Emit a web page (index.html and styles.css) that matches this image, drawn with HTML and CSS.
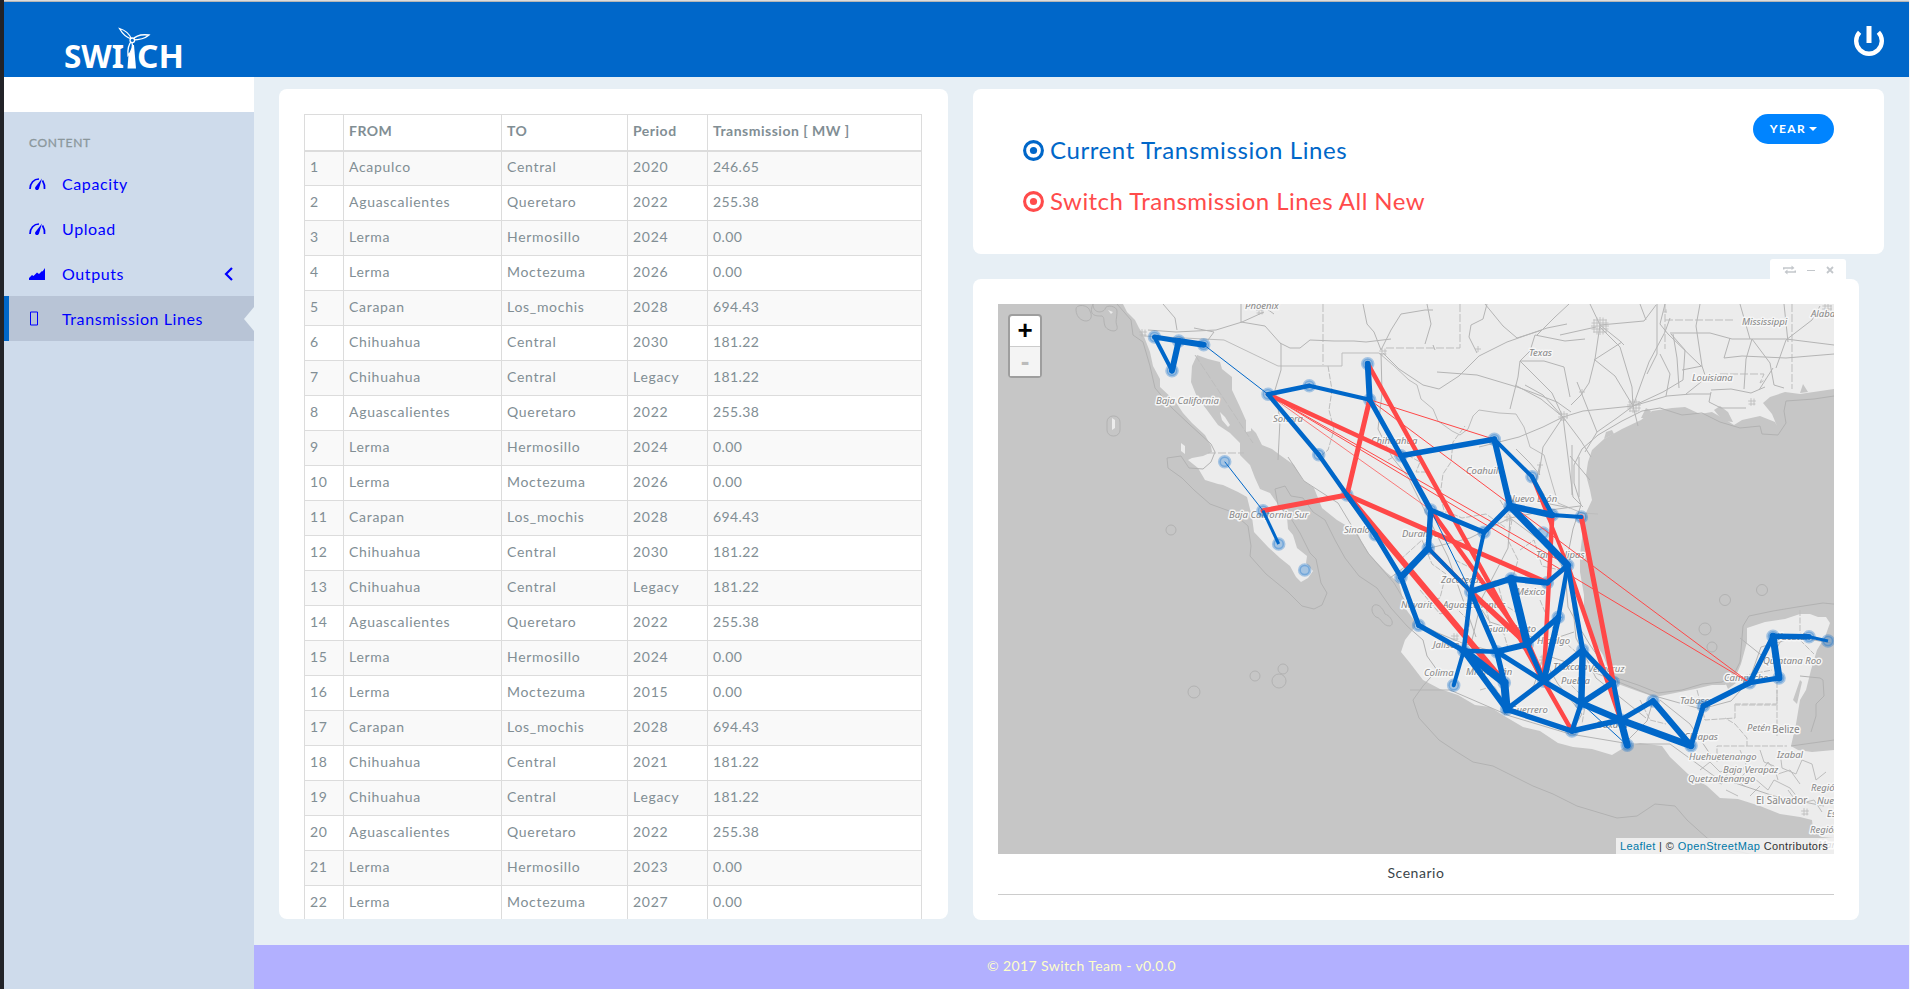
FILE: index.html
```html
<!DOCTYPE html>
<html lang="en">
<head>
<meta charset="utf-8">
<title>Switch - Transmission Lines</title>
<link rel="stylesheet" href="styles.css">
</head>
<body>
<header class="topbar">
  <svg class="logo" width="122" height="46" viewBox="62 26 122 46" fill="#fff">
    <text class="logo-text" x="64" y="68.4" textLength="60" lengthAdjust="spacingAndGlyphs">SWI</text>
    <text class="logo-text" x="137" y="68.4" textLength="47" lengthAdjust="spacingAndGlyphs">CH</text>
    <path d="M131 45h3l2 23.500h-8.500l1-14z"/>
    <g fill="#0067c9" stroke="#fff" stroke-width="1.300">
      <path d="M131.500 39c-5-1.500-9-5-12-10.500 5 1.500 9.500 4.500 12 10.500z"/>
      <path d="M132.500 40c3-4.500 8-6 16.500-5-4 3.500-10 5-16.500 5z"/>
      <path d="M131.500 41c2 5 0 10.500-3.500 14.500-.500-6 .500-11 3.500-14.500z"/>
      <circle cx="132.300" cy="40.300" r="2.300"/>
    </g>
  </svg>
  <svg class="power" width="30" height="30" viewBox="0 0 30 30" fill="none" stroke="#fff" stroke-width="4.400">
    <path d="M5.600 6.200A12.800 12.800 0 1 0 24.400 6.200"/><path d="M15 0v17" stroke-width="5"/>
  </svg>
</header>
<div class="page">
  <nav class="sidebar">
    <div class="menu">
      <div class="menu-title">CONTENT</div>
      <a class="item"><svg width="17" height="12" viewBox="0 0 17 12"><path d="M1 11C1 5 5 1 10 1M13.500 2.500C15 5 16 7.500 15.500 11" fill="none" stroke="#00f" stroke-width="1.700"/><path d="M13 .5L10 10.500a2 2 0 1 1-3.200-2z" fill="#00f"/></svg><span>Capacity</span></a>
      <a class="item"><svg width="17" height="12" viewBox="0 0 17 12"><path d="M1 11C1 5 5 1 10 1M13.500 2.500C15 5 16 7.500 15.500 11" fill="none" stroke="#00f" stroke-width="1.700"/><path d="M13 .5L10 10.500a2 2 0 1 1-3.200-2z" fill="#00f"/></svg><span>Upload</span></a>
      <a class="item"><svg width="17" height="12" viewBox="0 0 17 12"><path d="M0 12V10l3-3 1.500 1L8 4.500l2 1.500 3-3 .5.500L16 0v12z" fill="#00f"/></svg><span>Outputs</span><svg class="chev" width="9" height="14" viewBox="0 0 9 14"><path d="M8 1L2 7l6 6" fill="none" stroke="#00f" stroke-width="2.200"/></svg></a>
      <a class="item active"><svg width="17" height="15" viewBox="0 0 17 15"><path d="M1.500 1h7v13h-7z" fill="none" stroke="#00f"/></svg><span>Transmission Lines</span></a>
    </div>
  </nav>
  <div class="body">
    <main class="content">
      <section class="card table-card">
        <table class="grid">
          <colgroup><col class="c1"><col class="c2"><col class="c3"><col class="c4"><col class="c5"></colgroup>
          <thead><tr><th></th><th>FROM</th><th>TO</th><th>Period</th><th>Transmission [ MW ]</th></tr></thead>
          <tbody>
            <tr><td>1</td><td>Acapulco</td><td>Central</td><td>2020</td><td>246.65</td></tr>
            <tr><td>2</td><td>Aguascalientes</td><td>Queretaro</td><td>2022</td><td>255.38</td></tr>
            <tr><td>3</td><td>Lerma</td><td>Hermosillo</td><td>2024</td><td>0.00</td></tr>
            <tr><td>4</td><td>Lerma</td><td>Moctezuma</td><td>2026</td><td>0.00</td></tr>
            <tr><td>5</td><td>Carapan</td><td>Los_mochis</td><td>2028</td><td>694.43</td></tr>
            <tr><td>6</td><td>Chihuahua</td><td>Central</td><td>2030</td><td>181.22</td></tr>
            <tr><td>7</td><td>Chihuahua</td><td>Central</td><td>Legacy</td><td>181.22</td></tr>
            <tr><td>8</td><td>Aguascalientes</td><td>Queretaro</td><td>2022</td><td>255.38</td></tr>
            <tr><td>9</td><td>Lerma</td><td>Hermosillo</td><td>2024</td><td>0.00</td></tr>
            <tr><td>10</td><td>Lerma</td><td>Moctezuma</td><td>2026</td><td>0.00</td></tr>
            <tr><td>11</td><td>Carapan</td><td>Los_mochis</td><td>2028</td><td>694.43</td></tr>
            <tr><td>12</td><td>Chihuahua</td><td>Central</td><td>2030</td><td>181.22</td></tr>
            <tr><td>13</td><td>Chihuahua</td><td>Central</td><td>Legacy</td><td>181.22</td></tr>
            <tr><td>14</td><td>Aguascalientes</td><td>Queretaro</td><td>2022</td><td>255.38</td></tr>
            <tr><td>15</td><td>Lerma</td><td>Hermosillo</td><td>2024</td><td>0.00</td></tr>
            <tr><td>16</td><td>Lerma</td><td>Moctezuma</td><td>2015</td><td>0.00</td></tr>
            <tr><td>17</td><td>Carapan</td><td>Los_mochis</td><td>2028</td><td>694.43</td></tr>
            <tr><td>18</td><td>Chihuahua</td><td>Central</td><td>2021</td><td>181.22</td></tr>
            <tr><td>19</td><td>Chihuahua</td><td>Central</td><td>Legacy</td><td>181.22</td></tr>
            <tr><td>20</td><td>Aguascalientes</td><td>Queretaro</td><td>2022</td><td>255.38</td></tr>
            <tr><td>21</td><td>Lerma</td><td>Hermosillo</td><td>2023</td><td>0.00</td></tr>
            <tr><td>22</td><td>Lerma</td><td>Moctezuma</td><td>2027</td><td>0.00</td></tr>
          </tbody>
        </table>
      </section>
      <div class="right">
        <section class="card legend">
          <div class="legend-list">
            <div class="legend-row current"><svg width="21" height="21" viewBox="0 0 21 21"><circle cx="10.500" cy="10.500" r="8.900" fill="none" stroke="currentColor" stroke-width="3.100"/><circle cx="10.500" cy="10.500" r="3.600" fill="currentColor"/></svg><span>Current Transmission Lines</span></div>
            <div class="legend-row fresh"><svg width="21" height="21" viewBox="0 0 21 21"><circle cx="10.500" cy="10.500" r="8.900" fill="none" stroke="currentColor" stroke-width="3.100"/><circle cx="10.500" cy="10.500" r="3.600" fill="currentColor"/></svg><span>Switch Transmission Lines All New</span></div>
          </div>
          <button class="year">YEAR<i class="caret"></i></button>
        </section>
        <section class="card map-card">
          <div class="tools">
            <svg width="13" height="10" viewBox="0 0 13 10" fill="none" stroke="#c3c7cb" stroke-width="1.500"><path d="M.7 4.500V3h9M12.300 5.500V7h-9"/><path d="M8.500.5l3 2.500-3 2zM4.500 4.500L1.500 7l3 2.500z" fill="#c3c7cb" stroke="none"/></svg>
            <svg width="8" height="10" viewBox="0 0 8 10"><path d="M0 5.500h8" stroke="#c3c7cb"/></svg>
            <svg width="8" height="8" viewBox="0 0 8 8"><path d="M1 1l6 6M7 1L1 7" stroke="#c3c7cb" stroke-width="1.800"/></svg>
          </div>
          <div class="map">
            <svg id="map" width="836" height="550" viewBox="998 304 836 550">
              <path class="land" id="land" d="M1123 304L1127 312 1135 320 1139 328 1143 334 1150 352 1153 366 1160 379 1160 387 1175 401 1183 413 1192 423 1205 435 1211 446 1212 452 1203 456 1192 458 1188 460 1198 468 1205 480 1218 484 1223 485 1238 492 1247 497 1252 517 1254 532 1268 547 1280 558 1290 566 1296 577 1301 582 1308 578 1313 571 1306 563 1307 556 1297 548 1293 535 1288 529 1287 517 1277 503 1270 493 1260 489 1255 478 1250 465 1240 455 1240 443 1230 433 1218 425 1207 410 1197 397 1191 382 1192 366 1197 355 1208 359 1220 362 1222 369 1232 377 1232 390 1240 407 1248 425 1256 433 1262 445 1272 449 1280 455 1294 465 1303 480 1314 488 1322 508 1337 520 1347 526 1356 530 1362 542 1370 555 1386 572 1399 583 1402 595 1405 608 1414 620 1415 627 1405 640 1401 652 1410 663 1423 680 1440 689 1458 695 1475 705 1490 707 1506 717 1523 727 1540 731 1558 743 1573 747 1592 749 1612 755 1625 747 1640 743 1662 746 1670 757 1688 774 1707 786 1720 798 1738 799 1760 806 1780 814 1800 817 1812 820 1813 830 1822 837 1834 838V750L1812 752 1798 750 1791 746 1796 724 1800 700 1806 690 1811 670 1817 650 1825 637 1830 623 1826 617 1818 617 1810 614 1800 614 1785 619 1765 622 1747 628 1747 642 1741 664 1735 678 1725 685 1712 685 1695 689 1675 693 1655 697 1640 692 1618 684 1608 668 1603 655 1592 638 1584 620 1584 595 1580 572 1580 555 1583 530 1585 515 1592 500 1590 490 1586 475 1588 462 1592 450 1604 439 1622 429 1641 420 1652 411 1672 408 1685 407 1700 414 1712 412 1726 420 1734 425 1742 420 1760 416 1775 422 1777 426 1772 414 1763 403 1770 397 1785 392 1800 394 1834 389V304Z"/>
              <path class="land" d="M1112 418l3 2v8l-3 2zM1181 443l4 3v8l-4-3zM1220 412l5 5 5 8-2 2-6-7zM1246 420l5 3v8l-5 1zM1108 310l5 2-2 2zM1085 313l3 2z"/>
              <g class="water">
                <path d="M1725 682l6-4 5 5-8 6zM1793 700l7-20 2 2-5 22zM1799 546z"/>
                <path d="M1604 439l10-5-2-4-6 2zM1641 418l5-10 5 3-3 7zM1714 410l6-4 8 6 5 10-10-1zM1800 393l3-9 5 8z"/>
              </g>
              <path class="coast" d="M1117 304l14 16 2 15 10 7 7 24 5 22 17 20 17 16 22 20 4 8-4 10-8 7-14-1-8-12-14 2 1 10 14 10 12 12 16 14 22 8 16 14 3 20-1 10 16 18 22 18 14 14 12 3 8-4 5-12-6-10-5-24-6-6-10-20-10-16-12-12-3-16 10-3 6 10 12 2 10 14 12 8 10 20 10 18 14 18 18 12 14 20 16 18 16 14 4 16 10 14-14 16-10 14 6 18 20 22 18 12 16 10 20 4 20 10 20 10 20 8 24 12 20 6 20 6 20-2 18-12 20 2 12 14 20 18 20 12 14 2 24 6 22 12 24 6 10 4-1 12 10 7"/>
              <path class="coast" d="M1834 396l-20 3-28 2-2 10 2 12-8 12-16-1-2-8-20 2-20-6-18-9-20 2-22-7-18 3-20 10-24 14-16 14-8 16v18l7 22-8 24-6 30-1 24 2 24 10 18 12 20 14 20 10 12 24 8 20 8 24-3 20-6 20-2 12-8 6-12 3-36 6-10 24-5 24-4 26-4 20 2M1800 676l20 2 3 2 1 16-8 8v12l-5 16M1791 746l43-6"/>
              <g class="coast">
                <circle cx="1171" cy="530" r="5"/><circle cx="1194" cy="692" r="6"/><circle cx="1255" cy="676" r="5"/><circle cx="1283" cy="669" r="5"/><circle cx="1279" cy="681" r="7"/><circle cx="1725" cy="600" r="5.500"/><circle cx="1762" cy="590" r="5.500"/><circle cx="1705" cy="629" r="6"/><circle cx="1712" cy="647" r="5"/>
                <rect x="1107" y="416" width="13" height="20" rx="6"/><path d="M1076 309c0-5 12-5 14 2 4 8-2 12-8 9-4-2-6-6-6-11zM1093 304c0 10 10 9 12 5 1-5 12-3 12 2 0 8-2 10 0 15 2 8-10 5-12 0-2-6 0-8-3-10-6 0-14 0-9-12zM1373 606c4-4 10 2 12 8 6 2 10 10 5 12-8 0-8-8-14-9-4-3-5-8-3-11z"/>
              </g>
              <g class="border">
                <path d="M1144 336l80 4 54 26h64v-13h37M1379 353l14 12 16 15 8 5 4 14 12 10 5 12 14 10 8 4 8-6 5-13 6-6 20 3 17 1 8 13 6 20 14 8 8 28 6 20 24 10 16 1"/>
                <path d="M1323 304v61M1460 304v44h-74M1665 304v45M1792 304v85M1720 374h44l-4 9 6-4M1665 320h70M1195 355l58 88M1208 453h36" stroke-dasharray="8 2"/>
                <path d="M1328 366l4 24-3 20 5 20-6 20-10 8M1388 460l14-8 18 10-4 10 14 0M1444 510l-4-14 3-22 8-12 2-20 12-16M1430 512l18 0 14 6 24-4 20 14M1500 500l12 20-4 20 10 20-6 20M1455 560l20 10 10 14 12-4 6 24 16 10M1520 550l14-10 8 26 18 4M1400 560l22-20 10 24 14 10-6 24-16 4M1420 590l20 24 16-6 14 14-4 20M1484 600l6 24 14 10 4 14M1540 600l10 24 10 14 16 14M1480 690l14-4 8 12M1566 680l20 20-4 24M1640 700l10 20 16 4M1697 690l8 30 30-2v-14h42v-14M1777 682v54M1734 705h42M1717 762v-16h30v-8l-12-14-10-6M1757 582zM1747 746l40 0M1742 676l30-6M1800 610v30l14 14" stroke-dasharray="6 1.500"/>
                <path d="M1700 770l10-8 10 10 12-4 6 12 10-10 12 4 8-12 10 12 12-4 10 14M1708 780l14 4 6-12 16 14 10-8 14 12 6-10 16 8 8 10M1740 750l6 14-6 10M1760 750l4 12 10 4 4 14M1780 752l2 16 14 6 6-14 10 4 4 16 10-8M1788 790l10 14 16-4 8 12M1750 796l10-10M1726 790l12 6"/>
              </g>
              <g class="road">
                <path d="M1148 330l28 2 40-2 26-8 22-10M1163 304l12 14 2 12M1208 340l6-8-20-4M1241 304v18l24 4 16 18 0 26-6 20 5 30-2 40M1260 304l14 10M1280 343l10 5h10l10-8 24 1 20 0 12 1 25-3M1363 304l4 20 7 8 7 18M1381 350l10-20 10-16 24-4h8M1383 353l16 16 24 16 16 4 20-13 20-20 28-14 40-14 20-4M1433 345l2 5"/>
                <path d="M1427 304l4 20-6 20M1487 304l-4 15-12 6-2 12 8 16M1485 304l18 22 14 12 25-8M1437 372l40 3 40 12 14 5 26 10 14 10M1520 361l20 20 12 12 10 22M1520 361l-2 16-8 32M1535 335l-5 16-10 10M1520 361l24 0 20 6 6 30M1563 417l-20 10-24 10-40 10M1563 417l-20-22-18-10M1563 417l5 40 5 40 10 10M1563 417l-20 30-4 28M1563 417l20-6 20-2 30-3M1563 417l-22-18-26-14M1563 417l18 24 10 16M1540 475l-10-12-14-14M1540 464l-4 18 14 22 20 4"/>
                <path d="M1537 335l18-18 14-13M1535 335l30 6 20-2M1560 335l36-8M1600 325l20 16 4 4M1600 325l-5 34-6 24-8 12-10 10M1600 327l20 20 12 40 1 20M1600 325l44-4 12-16M1600 325l-10-21M1665 304l-5 20 8 10 33 32M1622 342l-28 18M1633 406l16-44 16-30 5-14M1633 406l30-14 20-12 2-30-14-16M1670 333h40l22 6 54 0 48 6M1702 366l-6-40 4-22M1702 366l4 12-20 16M1702 366l-20 4M1633 406l34-10 24-2 20 0M1711 392l-2 10 12 6h25M1711 390l20-1 20 4 14-6M1724 358l18-2 44 2 48-4M1752 339l-6 20-2 30M1752 339l18 24 4 22 10 3M1773 368l-14 22M1786 340l-10 28M1786 340l26-20 8-14M1750 339l-10-35M1788 342l-4-38M1724 358l6-20M1590 480l-20-24M1597 432l20-14 16-12M1597 432l-20-50M1597 432l-12 20M1633 406l5 20M1633 406l-18-30-20-16M1640 304l6 16M1657 304v50l-10 20M1660 354l10 20-4 22M1673 334l4 24 2 30M1572 495v-50M1579 497v-40"/>
                <path d="M1381 353l1 40-4 36 14 28 16 20 20 40 20 40 14 40 14 40M1288 457l16 24 34 22 30 50 26 30 24 40 20 10 24 10 30 8M1430 548l-40 30M1430 548l40-10 40-20 40-8 30-4M1510 518l-2 30-26 50-10 42M1510 518l40 30 20 30 6 60 20 40 50 40M1470 592l20 30 30 10 24 10 30-10M1545 655l30 10 36 14 40 16 50 14 30-8 18-20 12-34 36-10 34 6M1544 655l-10 30-30 30M1544 660l14 24 24 30-12 20M1410 690l40 0 60 26 60 18 60 10 40 0 44 32 60 20 50 10M1653 701l-6 20-20 20M1740 638l30 24 10-20 20-6M1660 700l30 24 20 30"/>
              </g>
              <g id="mesh" class="mesh"></g>
              <g class="label">
                <text x="1156" y="404">Baja California</text><text x="1273" y="422">Sonora</text><text x="1229" y="518">Baja California Sur</text><text x="1371" y="444">Chihuahua</text><text x="1466" y="474">Coahuila</text><text x="1508" y="502">Nuevo León</text><text x="1344" y="533">Sinaloa</text><text x="1402" y="537">Durango</text><text x="1536" y="558">Tamaulipas</text><text x="1441" y="583">Zacatecas</text><text x="1516" y="595">México</text><text x="1401" y="608">Nayarit</text><text x="1443" y="608">Aguascalientes</text><text x="1486" y="632">Guanajuato</text><text x="1433" y="648">Jalisco</text><text x="1537" y="644">Hidalgo</text><text x="1424" y="676">Colima</text><text x="1466" y="675">Michoacán</text><text x="1553" y="670">Tlaxcala</text><text x="1588" y="672">Veracruz</text><text x="1561" y="684">Puebla</text><text x="1510" y="713">Guerrero</text><text x="1596" y="728">Oaxaca</text><text x="1680" y="704">Tabasco</text><text x="1684" y="740">Chiapas</text><text x="1724" y="681">Campeche</text><text x="1777" y="640">Yucatán</text><text x="1763" y="664">Quintana Roo</text><text x="1747" y="731">Petén</text><text x="1777" y="758">Izabal</text><text x="1689" y="760">Huehuetenango</text><text x="1723" y="773">Baja Verapaz</text><text x="1688" y="782">Quetzaltenango</text><text x="1811" y="791">Región</text><text x="1817" y="804">Nueva</text><text x="1827" y="817">Est</text><text x="1810" y="833">Región</text><text x="1818" y="848">Managua</text>
                <text x="1529" y="356">Texas</text><text x="1692" y="381">Louisiana</text><text x="1742" y="325">Mississippi</text><text x="1811" y="317">Alabama</text>
                <text class="up" x="1772" y="733">Belize</text><text class="up" x="1756" y="804">El Salvador</text><text x="1245" y="309">Phoenix</text>
              </g>
              <g id="nodes" class="node"></g>
              <g id="red" class="red"></g>
              <g id="blue" class="blue"></g>
            </svg>
            <div class="zoom"><span>+</span><span class="off">-</span></div>
            <div class="attribution"><a>Leaflet</a> | © <a>OpenStreetMap</a> Contributors</div>
          </div>
          <div class="caption">Scenario</div>
        </section>
      </div>
    </main>
    <footer class="footer">© 2017 Switch Team - v0.0.0</footer>
  </div>
</div>
<script src="map.js"></script>
</body>
</html>
```
FILE: styles.css
```css
* { box-sizing: border-box; }
html, body { height: 100%; }
body {
  margin: 0;
  display: flex;
  flex-direction: column;
  overflow: hidden;
  background: #e7eff5;
  border-left: 4px solid #222328;
  border-right: 1px solid #f4f6f8;
  font-family: Lato, "Liberation Sans", sans-serif;
  font-size: 14px;
  letter-spacing: 0.7px;
  color: #818e94;
}
.topbar {
  flex: 0 0 77px;
  display: flex;
  justify-content: space-between;
  align-items: flex-start;
  padding: 24px 25px 0 58px;
  background: #0067c9;
  border-top: 1px solid #dcdcdc;
  box-shadow: inset 0 1px 0 #b6b6b6;
}
.logo { margin-top: 1px; overflow: visible; }
.logo-text { font: 700 32px "Noto Sans", sans-serif; letter-spacing: 0; }
.power { margin-top: 1px; }
.page { flex: 1; display: flex; min-height: 0; }
.sidebar { flex: 0 0 250px; padding-top: 35px; background: #fff; }
.menu { height: 100%; background: #cedbeb; }
.menu-title { padding: 23px 0 0 25px; height: 49px; font-size: 12px; line-height: 16px; color: #8b979c; -webkit-text-stroke: 0.3px #8b979c; }
.item {
  display: flex;
  align-items: center;
  height: 45px;
  padding: 0 21px 0 25px;
  color: #00f;
  font-size: 16px;
  letter-spacing: 0.6px;
}
.item span { margin-left: 16px; flex: 1; }
.active {
  background: #b8c4d6;
  border-left: 5px solid #0067c9;
  padding-left: 20px;
  padding-right: 0;
}
.active::after { content: ""; border: solid transparent; border-width: 12px 10px 12px 0; border-right-color: #e7eff5; }
.body { flex: 1; display: flex; flex-direction: column; min-width: 0; }
.content { flex: 1; display: flex; gap: 25px; padding: 12px 25px 25px; min-height: 0; }
.card { background: #fff; border-radius: 8px; }
.table-card { width: 669px; height: 830px; padding: 25px; overflow: hidden; }
.grid { width: 618px; table-layout: fixed; border-collapse: collapse; }
.c1 { width: 39px; } .c2 { width: 158px; } .c3 { width: 126px; } .c4 { width: 80px; }
.grid th, .grid td { height: 35px; padding: 0 5px 2px; border: 1px solid #dcdcdc; text-align: left; line-height: 20px; white-space: nowrap; }
.grid th { height: 36px; border-bottom-width: 2px; font-weight: 700; letter-spacing: 0.5px; }
.grid td:last-child { letter-spacing: 0.4px; }
.grid tbody tr:nth-child(odd) { background: #f9f9f9; }
.right { flex: 1; display: flex; flex-direction: column; gap: 25px; min-width: 0; }
.legend { height: 165px; display: flex; justify-content: space-between; align-items: flex-start; padding: 25px 50px; }
.legend-list { padding-top: 11px; display: flex; flex-direction: column; }
.legend-row { display: flex; align-items: center; gap: 6px; height: 51px; font-size: 24px; letter-spacing: 0.6px; }
.legend-row span { padding-bottom: 2px; }
.current { color: #0067c9; }
.fresh { color: #ff4b4b; letter-spacing: 0.46px; }
.year {
  display: flex; align-items: center; justify-content: center; gap: 3px;
  width: 81px; height: 30px; padding: 0 0 1px;
  border: 0; border-radius: 15px;
  background: #0084ff; color: #fff;
  font: 700 12px Lato, sans-serif; letter-spacing: 1.4px;
}
.caret { border: 4px solid transparent; border-top-color: #fff; border-bottom: 0; }
.map-card { position: relative; width: 886px; height: 641px; padding: 25px 25px 0; }
.tools {
  position: absolute; top: -20px; right: 13px;
  display: flex; align-items: center; gap: 11px;
  width: 76px; height: 22px; padding: 0 0 0 13px;
  background: #fff; border-radius: 3px 3px 0 0;
}
.map { position: relative; height: 550px; background: #c6c6c6; overflow: hidden; }
.map svg { display: block; }
.zoom {
  position: absolute; left: 10px; top: 10px;
  width: 34px; height: 64px;
  border: 2px solid #9e9e9e; border-radius: 4px; background: #fff;
  font: 700 26px/28px "Liberation Sans", sans-serif; text-align: center; color: #000; letter-spacing: 0;
}
.zoom span { display: block; height: 30px; }
.zoom .off { border-top: 1px solid #ccc; background: #f4f4f4; color: #bbb; height: 30px; }
.attribution {
  position: absolute; right: 0; bottom: 0;
  width: 218px; height: 16px; padding-left: 4px;
  background: rgba(255, 255, 255, 0.7);
  font: 11px/16px "Liberation Sans", sans-serif; letter-spacing: 0.38px; color: #333; white-space: nowrap;
}
.attribution a { color: #0078a8; }
.caption { height: 41px; border-bottom: 1px solid #ccc; text-align: center; line-height: 38px; color: #3a4449; letter-spacing: 0.55px; }
.footer { height: 44px; background: #b2b0ff; color: #ffffc8; text-align: center; line-height: 41px; letter-spacing: 0.4px; }
.land { fill: #ececec; }
.water { fill: #c6c6c6; }
.coast { fill: none; stroke: #b2b2b2; stroke-width: 1; }
.border { fill: none; stroke: #bdbdbd; stroke-width: 1; }
.road { fill: none; stroke: #b4b4b4; stroke-width: 1; stroke-linejoin: round; }
.mesh { fill: none; stroke: #bababa; stroke-width: .8; }
.label { font: italic 9.5px "Noto Sans", sans-serif; letter-spacing: 0; fill: #858585; stroke: #f6f6f6; stroke-width: 3px; stroke-linejoin: round; paint-order: stroke; }
.up { font-style: normal; font-size: 10px; }
.node circle { fill: #0067c9; fill-opacity: .3; stroke: #0067c9; stroke-width: 3; stroke-opacity: .3; }
.red path { stroke: #ff4848; fill: none; }
.blue path { stroke: #0067c9; fill: none; }
```
FILE: map.js
```js
const NS = "http://www.w3.org/2000/svg";

const nodes = {
  A: [1154.5, 337], B: [1178.7, 341], C: [1203.7, 344.7], D: [1172, 370.7], E: [1268, 394.3],
  F: [1224.7, 461.7], G: [1263, 510.7], H: [1278.7, 544], I: [1309.3, 385.7], J: [1367.7, 363.7],
  K: [1369.7, 399.7], L: [1318.7, 454.7], M: [1347, 495], N: [1401, 455.7], O: [1494.3, 439.3],
  P: [1532, 476.7], Q: [1510, 506], R: [1552.3, 515], S: [1581.3, 517], T: [1430.7, 510],
  U: [1484, 532.3], V: [1428.3, 548.3], W: [1375.3, 534.7], X: [1401, 577.3], Y: [1567.7, 565.3],
  Z: [1304.7, 570], AA: [1511.3, 578.7], AB: [1547.3, 582.7], AC: [1470.7, 591.7], AD: [1418.7, 625.3],
  AE: [1558.3, 617.3], AF: [1527.3, 644.3], AG: [1496.7, 651.7], AH: [1463.7, 650.7], AI: [1453.7, 685.3],
  AJ: [1504.3, 682.7], AK: [1506.7, 709.3], AL: [1543.7, 681.3], AM: [1582.7, 650], AN: [1581.3, 703.3],
  AO: [1572, 731], AP: [1613.3, 682.3], AQ: [1620.7, 720], AR: [1627.3, 745.3], AS: [1653, 701],
  AT: [1691, 745.7], AU: [1703.3, 706], AV: [1749.7, 682.7], AW: [1779, 678], AX: [1773, 636.3],
  AY: [1809, 636.7], AZ: [1828, 641], BA: [1543, 533]
};

// Each entry is "from-to:width".
const red = "E-N:4.5 E-T:.7 E-Y:1 E-AV:1 K-AV:1 K-O:1 M-K:5 M-G:5 M-AB:5 J-AL:4.5 M-AJ:6 T-AF:4.5 AC-AF:5.5 V-AC:4 AF-AL:7 P-Y:3.5 R-AL:4.5 S-AP:5 Y-AQ:4.5 AL-AO:4.5";
const blue = "F-G:1 G-H:3 A-D:4 D-B:6 A-B:5 B-C:6 C-E:1 E-I:4.5 E-L:4.5 I-K:4 J-K:6 K-N:5 N-O:5.5 O-P:4 O-Q:6 P-R:4.5 Q-R:6.5 R-S:4 Q-U:5 Q-Y:7 U-T:5 N-T:5.5 T-V:5.5 T-AC:1 V-AC:4 V-X:6.5 L-M:4.5 M-W:5 W-X:5 X-AD:5 AD-AH:5 AH-AC:4.5 AC-U:4 AC-AA:6 AA-AB:6 AB-Y:5 AA-AF:8 Y-AE:4.5 AE-AL:6 AE-AF:5.5 AF-AL:5 AF-AG:6 AC-AG:5 AG-AH:4.5 AH-AI:4 AH-AJ:8 AH-AK:6 AG-AJ:5.5 AJ-AK:8 AG-AL:5 AK-AL:5 AK-AO:5.5 AL-AM:5.5 Y-AM:5 AM-AN:6.5 AL-AN:5.5 AM-AP:5 AN-AP:6 AN-AO:5 AN-AQ:6.5 AO-AQ:5.5 AP-AQ:5 AN-AR:1 AQ-AR:7 AQ-AS:5 AQ-AT:7 AS-AT:6 AT-AU:5 AU-AV:5.5 AV-AW:5 AV-AX:5 AX-AW:7 AX-AY:5.5 AY-AZ:3";

function add(parent, tag, attrs) {
  const el = document.createElementNS(NS, tag);
  for (const key in attrs) el.setAttribute(key, attrs[key]);
  document.getElementById(parent).appendChild(el);
}

function drawLines(parent, list) {
  for (const item of list.split(" ")) {
    const [ends, width] = item.split(":");
    const [a, b] = ends.split("-").map(id => nodes[id]);
    add(parent, "path", { d: `M${a}L${b}`, "stroke-width": width, "stroke-linecap": width > 3 ? "round" : "butt" });
  }
}

for (const id in nodes) add("nodes", "circle", { cx: nodes[id][0], cy: nodes[id][1], r: 5.3 });
drawLines("red", red);
drawLines("blue", blue);

// Street grids of the larger cities.
const cities = [[1600, 326, 9], [1634, 406, 7], [1563, 416, 5], [1383, 352, 4], [1478, 349, 3], [1143, 333, 4],
  [1508, 518, 4], [1545, 660, 6], [1455, 637, 4], [1827, 308, 5], [1260, 311, 4], [1752, 402, 4], [1665, 311, 2],
  [1582, 392, 3], [1540, 465, 3], [1805, 812, 4]];
for (const [x, y, r] of cities) {
  let d = "";
  for (let i = -r; i <= r; i += 3) {
    const w = Math.sqrt(r * r - i * i);
    d += `M${x - w} ${y + i}h${2 * w}M${x + i} ${y - w}v${2 * w}`;
  }
  add("mesh", "path", { d });
}
```
